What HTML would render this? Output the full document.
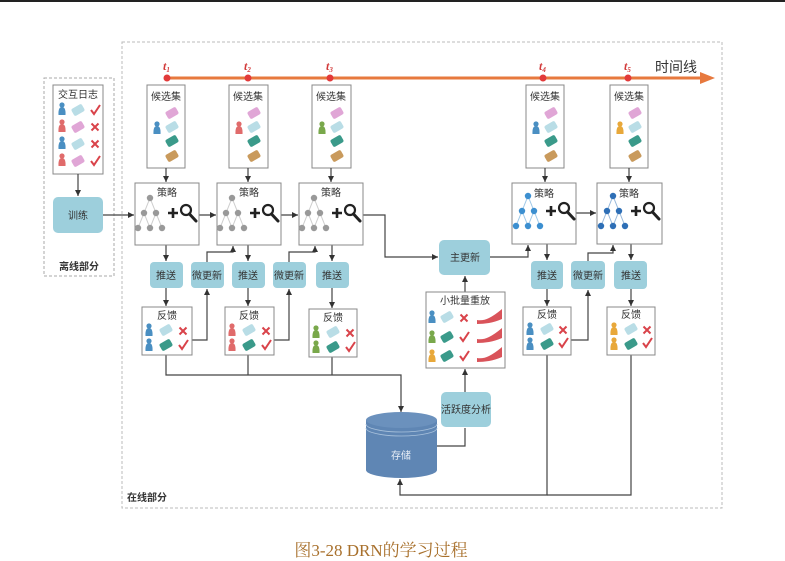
<!DOCTYPE html>
<html><head><meta charset="utf-8"><style>
html,body{margin:0;padding:0;background:#fff;}
svg{display:block;}
text{font-family:"Liberation Sans","Noto Sans CJK SC",sans-serif;}
</style></head><body>
<svg width="785" height="561" viewBox="0 0 785 561" xmlns="http://www.w3.org/2000/svg">
<defs>
<marker id="ar" markerWidth="6" markerHeight="6" refX="5" refY="3" orient="auto"><path d="M0,0.5 L5,3 L0,5.5z" fill="#333"/></marker>
<symbol id="tree" overflow="visible">
<path d="M15,18 L9,33 L3,48 M15,18 L21,33 L27,48 M9,33 L15,48 M21,33 L15,48" stroke-width="1" fill="none" stroke="currentColor" opacity=".5"/>
<circle cx="15" cy="18" r="3.2" fill="currentColor"/><circle cx="9" cy="33" r="3.2" fill="currentColor"/><circle cx="21" cy="33" r="3.2" fill="currentColor"/>
<circle cx="3" cy="48" r="3.2" fill="currentColor"/><circle cx="15" cy="48" r="3.2" fill="currentColor"/><circle cx="27" cy="48" r="3.2" fill="currentColor"/>
<path d="M33,33 h10 M38,28 v10" stroke="#222" stroke-width="2.6"/>
<circle cx="51" cy="30" r="5" fill="none" stroke="#222" stroke-width="2.2"/><path d="M54.5,34 L61,41" stroke="#222" stroke-width="3" stroke-linecap="round"/>
</symbol>
<symbol id="p" overflow="visible"><circle cx="0" cy="-5" r="2.6" fill="currentColor"/><path d="M-3.5,5 Q-4,-3 0,-3 Q4,-3 3.5,5z" fill="currentColor"/></symbol>
<symbol id="c" overflow="visible"><rect x="-6" y="-4" width="12" height="8" rx="2" transform="rotate(-30)" fill="currentColor"/></symbol>
<symbol id="ok" overflow="visible"><path d="M-4,0 L-1,4 L5,-5" stroke="#d9434a" stroke-width="2" fill="none"/></symbol>
<symbol id="no" overflow="visible"><path d="M-3.5,-3.5 L3.5,3.5 M3.5,-3.5 L-3.5,3.5" stroke="#d9434a" stroke-width="2"/></symbol>
<symbol id="wave" overflow="visible"><path d="M0,6 Q6,7 12,4 Q18,1 25,-5 V5 Q18,8 12,9 Q6,10 0,10z" fill="#d9535a"/></symbol>
</defs>
<rect x="0" y="0" width="785" height="2" fill="#222"/>
<rect x="122" y="42" width="600" height="466" fill="none" stroke="#bbb" stroke-dasharray="3,2"/>
<rect x="44" y="78" width="70" height="198" fill="none" stroke="#aaa" stroke-dasharray="3,2"/>
<text x="79" y="270" font-size="10" font-weight="bold" text-anchor="middle" fill="#333">离线部分</text>
<text x="127" y="501" font-size="10" font-weight="bold" fill="#333">在线部分</text>
<path d="M167,78 H702" stroke="#e7793e" stroke-width="3"/>
<path d="M700,72 L715,78 L700,84z" fill="#e7793e"/>
<text x="655" y="72" font-size="14" fill="#333">时间线</text>
<g fill="#e23a3a"><circle cx="167" cy="78" r="3.5"/><circle cx="248" cy="78" r="3.5"/><circle cx="330" cy="78" r="3.5"/><circle cx="543" cy="78" r="3.5"/><circle cx="628" cy="78" r="3.5"/></g>
<g style="font-family:'Liberation Serif',serif;font-style:italic;font-weight:bold" font-size="12" fill="#d23a3a">
<text x="163" y="70" style="font-family:'Liberation Serif',serif">t<tspan font-size="7" dy="2">1</tspan></text><text x="244" y="70" style="font-family:'Liberation Serif',serif">t<tspan font-size="7" dy="2">2</tspan></text><text x="326" y="70" style="font-family:'Liberation Serif',serif">t<tspan font-size="7" dy="2">3</tspan></text><text x="539" y="70" style="font-family:'Liberation Serif',serif">t<tspan font-size="7" dy="2">4</tspan></text><text x="624" y="70" style="font-family:'Liberation Serif',serif">t<tspan font-size="7" dy="2">5</tspan></text></g>
<rect x="53" y="85" width="50" height="89" fill="#fff" stroke="#888"/>
<text x="78" y="98" font-size="10" text-anchor="middle" fill="#333">交互日志</text>
<use href="#p" x="62" y="110" color="#4a8fc2"/><use href="#c" x="78" y="110" color="#b9dde6"/><use href="#ok" x="95" y="110"/>
<use href="#p" x="62" y="127" color="#e06b6b"/><use href="#c" x="78" y="127" color="#e0a6d6"/><use href="#no" x="95" y="127"/>
<use href="#p" x="62" y="144" color="#4a8fc2"/><use href="#c" x="78" y="144" color="#b9dde6"/><use href="#no" x="95" y="144"/>
<use href="#p" x="62" y="161" color="#e06b6b"/><use href="#c" x="78" y="161" color="#e0a6d6"/><use href="#ok" x="95" y="161"/>
<rect x="53" y="197" width="50" height="36" rx="5" fill="#9dcfdc"/><text x="78" y="219" font-size="10" text-anchor="middle" fill="#333">训练</text>
<g font-size="10" fill="#333" text-anchor="middle">
<g stroke="#888" fill="#fff"><rect x="147" y="85" width="38" height="83"/><rect x="229" y="85" width="39" height="83"/><rect x="312" y="85" width="39" height="83"/><rect x="526" y="85" width="38" height="83"/><rect x="610" y="85" width="38" height="83"/></g>
<text x="166" y="100">候选集</text><text x="248" y="100">候选集</text><text x="331" y="100">候选集</text><text x="545" y="100">候选集</text><text x="629" y="100">候选集</text>
</g>
<g>
<use href="#p" x="157" y="129" color="#4a8fc2"/><use href="#c" x="172" y="113" color="#e0a6d6"/><use href="#c" x="172" y="127" color="#b9dde6"/><use href="#c" x="172" y="141" color="#3a9a8a"/><use href="#c" x="172" y="156" color="#c99a5c"/>
<use href="#p" x="239" y="129" color="#e06b6b"/><use href="#c" x="254" y="113" color="#e0a6d6"/><use href="#c" x="254" y="127" color="#b9dde6"/><use href="#c" x="254" y="141" color="#3a9a8a"/><use href="#c" x="254" y="156" color="#c99a5c"/>
<use href="#p" x="322" y="129" color="#79a84b"/><use href="#c" x="337" y="113" color="#e0a6d6"/><use href="#c" x="337" y="127" color="#b9dde6"/><use href="#c" x="337" y="141" color="#3a9a8a"/><use href="#c" x="337" y="156" color="#c99a5c"/>
<use href="#p" x="536" y="129" color="#4a8fc2"/><use href="#c" x="551" y="113" color="#e0a6d6"/><use href="#c" x="551" y="127" color="#b9dde6"/><use href="#c" x="551" y="141" color="#3a9a8a"/><use href="#c" x="551" y="156" color="#c99a5c"/>
<use href="#p" x="620" y="129" color="#e8a83a"/><use href="#c" x="635" y="113" color="#e0a6d6"/><use href="#c" x="635" y="127" color="#b9dde6"/><use href="#c" x="635" y="141" color="#3a9a8a"/><use href="#c" x="635" y="156" color="#c99a5c"/>
</g>
<g stroke="#444" stroke-width="1.2" fill="none" marker-end="url(#ar)">
<path d="M78,174 V196"/><path d="M103,215 H134"/><path d="M199,215 H216"/><path d="M281,215 H298"/>
<path d="M363,215 H385 V257 H438"/><path d="M490,257 H528 V245"/><path d="M576,213 H596"/>
<path d="M166,168 V182"/><path d="M248,168 V182"/><path d="M331,168 V182"/><path d="M545,168 V182"/><path d="M629,168 V182"/>
<path d="M166,245 V261"/><path d="M166,288 V306"/><path d="M248,245 V261"/><path d="M248,288 V306"/><path d="M332,245 V261"/><path d="M332,288 V308"/><path d="M547,244 V260"/><path d="M547,289 V306"/><path d="M631,244 V260"/><path d="M631,289 V306"/>
<path d="M192,340 H207 V289"/><path d="M207,262 V252 H233 V246"/>
<path d="M274,340 H289 V289"/><path d="M289,262 V252 H315 V246"/>
<path d="M571,340 H588 V290"/><path d="M588,261 V253 H613 V245"/>
<path d="M166,355 V375 H401 V412"/>
<path d="M437,446 H465 V428" marker-end="none"/><path d="M465,392 V369"/><path d="M465,292 V276"/>
<path d="M547,355 V495 H400 V479"/><path d="M631,355 V495 H547" marker-end="none"/>
<path d="M248,355 V375" marker-end="none"/><path d="M332,357 V375" marker-end="none"/>
</g>
<g stroke="#888" fill="#fff"><rect x="135" y="183" width="64" height="62"/><rect x="217" y="183" width="64" height="62"/><rect x="299" y="183" width="64" height="62"/><rect x="512" y="183" width="64" height="61"/><rect x="597" y="183" width="65" height="61"/></g>
<g font-size="10" fill="#333" text-anchor="middle"><text x="167" y="196">策略</text><text x="249" y="196">策略</text><text x="331" y="196">策略</text><text x="544" y="197">策略</text><text x="629" y="197">策略</text></g>
<use href="#tree" x="135" y="180" color="#999"/><use href="#tree" x="217" y="180" color="#999"/><use href="#tree" x="299" y="180" color="#999"/>
<use href="#tree" x="513" y="178" color="#3c8fd0"/><use href="#tree" x="598" y="178" color="#2e6fb6"/>
<g fill="#9dcfdc"><rect x="150" y="262" width="33" height="26" rx="4"/><rect x="191" y="262" width="33" height="26" rx="4"/><rect x="232" y="262" width="33" height="26" rx="4"/><rect x="273" y="262" width="33" height="26" rx="4"/><rect x="316" y="262" width="33" height="26" rx="4"/>
<rect x="531" y="261" width="32" height="28" rx="4"/><rect x="571" y="261" width="34" height="28" rx="4"/><rect x="614" y="261" width="33" height="28" rx="4"/>
<rect x="439" y="240" width="51" height="35" rx="5"/><rect x="441" y="392" width="50" height="35" rx="5"/></g>
<g font-size="10" fill="#333" text-anchor="middle">
<text x="166" y="279">推送</text><text x="207" y="279">微更新</text><text x="248" y="279">推送</text><text x="289" y="279">微更新</text><text x="332" y="279">推送</text>
<text x="547" y="279">推送</text><text x="588" y="279">微更新</text><text x="631" y="279">推送</text>
<text x="465" y="261">主更新</text><text x="466" y="413">活跃度分析</text></g>
<g stroke="#888" fill="#fff"><rect x="142" y="307" width="50" height="48"/><rect x="225" y="307" width="49" height="48"/><rect x="309" y="309" width="48" height="48"/><rect x="523" y="307" width="48" height="48"/><rect x="607" y="307" width="48" height="48"/>
<rect x="426" y="292" width="79" height="76"/></g>
<g font-size="10" fill="#333" text-anchor="middle"><text x="167" y="319">反馈</text><text x="249" y="319">反馈</text><text x="333" y="321">反馈</text><text x="547" y="318">反馈</text><text x="631" y="318">反馈</text><text x="465" y="304">小批量重放</text></g>
<g>
<use href="#p" x="149" y="331" color="#4a8fc2"/><use href="#c" x="166" y="330" color="#b9dde6"/><use href="#no" x="183" y="331"/>
<use href="#p" x="149" y="346" color="#4a8fc2"/><use href="#c" x="166" y="345" color="#3a9a8a"/><use href="#ok" x="183" y="345"/>
<use href="#p" x="232" y="331" color="#e06b6b"/><use href="#c" x="249" y="330" color="#b9dde6"/><use href="#no" x="266" y="331"/>
<use href="#p" x="232" y="346" color="#e06b6b"/><use href="#c" x="249" y="345" color="#3a9a8a"/><use href="#ok" x="266" y="345"/>
<use href="#p" x="316" y="333" color="#79a84b"/><use href="#c" x="333" y="332" color="#b9dde6"/><use href="#no" x="350" y="333"/>
<use href="#p" x="316" y="348" color="#79a84b"/><use href="#c" x="333" y="347" color="#3a9a8a"/><use href="#ok" x="350" y="347"/>
<use href="#p" x="530" y="330" color="#4a8fc2"/><use href="#c" x="547" y="329" color="#b9dde6"/><use href="#no" x="563" y="330"/>
<use href="#p" x="530" y="345" color="#4a8fc2"/><use href="#c" x="547" y="344" color="#3a9a8a"/><use href="#ok" x="563" y="343"/>
<use href="#p" x="614" y="330" color="#e8a83a"/><use href="#c" x="631" y="329" color="#b9dde6"/><use href="#no" x="647" y="330"/>
<use href="#p" x="614" y="345" color="#e8a83a"/><use href="#c" x="631" y="344" color="#3a9a8a"/><use href="#ok" x="647" y="343"/>
<use href="#p" x="432" y="318" color="#4a8fc2"/><use href="#c" x="447" y="317" color="#b9dde6"/><use href="#no" x="464" y="318"/>
<use href="#p" x="432" y="338" color="#79a84b"/><use href="#c" x="447" y="337" color="#3a9a8a"/><use href="#ok" x="464" y="337"/>
<use href="#p" x="432" y="357" color="#e8a83a"/><use href="#c" x="447" y="356" color="#3a9a8a"/><use href="#ok" x="464" y="356"/>
<use href="#wave" x="477" y="314"/><use href="#wave" x="477" y="333"/><use href="#wave" x="477" y="352"/>
</g>
<path d="M366,420 V470 A35.5,8 0 0 0 437,470 V420z" fill="#5f86b4"/>
<ellipse cx="401.5" cy="420" rx="35.5" ry="8" fill="#6b91bd"/>
<path d="M366,424 A35.5,8 0 0 0 437,424 M366,428 A35.5,8 0 0 0 437,428" stroke="#a9c2dc" fill="none" stroke-width="0.8"/>
<text x="401" y="459" font-size="10" fill="#e8eef6" text-anchor="middle">存储</text>
<text x="381" y="556" style="font-family:'Liberation Serif','Noto Serif CJK SC',serif" font-size="17" fill="#a8702c" text-anchor="middle">图3-28 DRN的学习过程</text>
</svg>
</body></html>
